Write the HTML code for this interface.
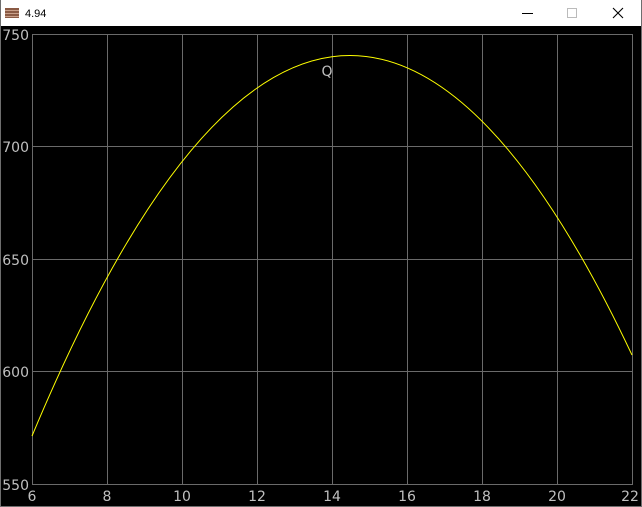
<!DOCTYPE html>
<html><head><meta charset="utf-8"><style>
html,body{margin:0;padding:0;width:642px;height:507px;overflow:hidden;background:#000;}
</style></head><body>
<svg width="642" height="507" xmlns="http://www.w3.org/2000/svg" style="display:block">
<rect x="0" y="0" width="642" height="507" fill="#000"/>
<rect x="0" y="0" width="642" height="26" fill="#fff"/>
<rect x="0" y="0" width="1" height="507" fill="#6e6e6e"/>
<rect x="641" y="0" width="1" height="507" fill="#6e6e6e"/>
<rect x="0" y="506" width="642" height="1" fill="#6e6e6e"/>
<g>
<rect x="5" y="8" width="14" height="10" fill="#8a5a44"/>
<rect x="5" y="10" width="14" height="1" fill="#c9a08a"/>
<rect x="5" y="13" width="14" height="1" fill="#c9a08a"/>
<rect x="5" y="16" width="14" height="1" fill="#c9a08a"/>
</g>
<text x="25" y="17" font-family="Liberation Sans, sans-serif" font-size="11" fill="#000">4.94</text>
<line x1="522" y1="13.5" x2="533" y2="13.5" stroke="#000" stroke-width="1"/>
<rect x="567.5" y="8.5" width="9" height="9" fill="none" stroke="#bbb"/>
<path d="M613 8 L623 18 M623 8 L613 18" stroke="#000" stroke-width="1.1"/>
<g stroke="#6a6a6a" stroke-width="1" fill="none" shape-rendering="crispEdges">
<line x1="32.5" y1="34" x2="32.5" y2="484"/>
<line x1="107.5" y1="34" x2="107.5" y2="484"/>
<line x1="182.5" y1="34" x2="182.5" y2="484"/>
<line x1="257.5" y1="34" x2="257.5" y2="484"/>
<line x1="332.5" y1="34" x2="332.5" y2="484"/>
<line x1="407.5" y1="34" x2="407.5" y2="484"/>
<line x1="482.5" y1="34" x2="482.5" y2="484"/>
<line x1="557.5" y1="34" x2="557.5" y2="484"/>
<line x1="632.5" y1="34" x2="632.5" y2="484"/>
<line x1="32" y1="34.5" x2="633" y2="34.5"/>
<line x1="32" y1="146.5" x2="633" y2="146.5"/>
<line x1="32" y1="259.5" x2="633" y2="259.5"/>
<line x1="32" y1="371.5" x2="633" y2="371.5"/>
<line x1="32" y1="484.5" x2="633" y2="484.5"/>
</g>
<path d="M32 436 Q332 -282 632 355" stroke="#ffff00" stroke-width="1" fill="none"/>
<g font-family="DejaVu Sans, sans-serif" font-size="14" fill="#c0c0c0">
<text x="29" y="40" text-anchor="end">750</text>
<text x="29" y="152" text-anchor="end">700</text>
<text x="29" y="265" text-anchor="end">650</text>
<text x="29" y="377" text-anchor="end">600</text>
<text x="29" y="490" text-anchor="end">550</text>
<text x="32" y="501" text-anchor="middle">6</text>
<text x="107" y="501" text-anchor="middle">8</text>
<text x="182" y="501" text-anchor="middle">10</text>
<text x="257" y="501" text-anchor="middle">12</text>
<text x="332" y="501" text-anchor="middle">14</text>
<text x="407" y="501" text-anchor="middle">16</text>
<text x="482" y="501" text-anchor="middle">18</text>
<text x="557" y="501" text-anchor="middle">20</text>
<text x="630" y="501" text-anchor="middle">22</text>
<text x="327" y="76" text-anchor="middle">Q</text>
</g>
</svg>
</body></html>
